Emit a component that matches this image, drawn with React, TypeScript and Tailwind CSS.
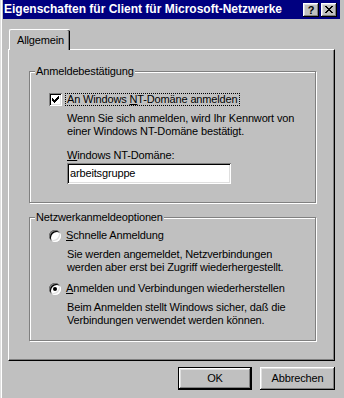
import React from 'react';

const RAISED =
  'shadow-[inset_-1px_-1px_0_#000,inset_1px_1px_0_#fff,inset_-2px_-2px_0_#808080,inset_2px_2px_0_#dfdfdf]';
const SUNKEN =
  'shadow-[inset_1px_1px_0_#808080,inset_-1px_-1px_0_#fff,inset_2px_2px_0_#000,inset_-2px_-2px_0_#dfdfdf]';

function Checkbox({ checked }: { checked?: boolean }) {
  return (
    <span className={`flex items-center justify-center w-[13px] h-[13px] bg-white shrink-0 ${SUNKEN}`}>
      {checked && (
        <svg width="7" height="7" viewBox="0 0 7 7">
          <path d="M0 2H1V3H2V4H3V3H4V2H5V1H6V0H7V3H6V4H5V5H4V6H3V7H2V6H1V5H0Z" fill="#000" />
        </svg>
      )}
    </span>
  );
}

function Radio({ checked }: { checked?: boolean }) {
  return (
    <span
      className={`flex items-center justify-center w-[12px] h-[12px] rounded-full bg-white shrink-0 ${SUNKEN}`}
    >
      {checked && <span className="w-[4px] h-[4px] rounded-full bg-black" />}
    </span>
  );
}

function GroupBox({
  title,
  className,
  children,
}: {
  title: string;
  className: string;
  children: React.ReactNode;
}) {
  return (
    <div
      className={`relative border border-[#808080] shadow-[1px_1px_0_#fff,inset_1px_1px_0_#fff] ${className}`}
    >
      <span className="absolute -top-[7px] left-[5px] px-[1px] bg-[#c0c0c0] leading-[13px]">{title}</span>
      {children}
    </div>
  );
}

function Option({
  control,
  focus,
  children,
}: {
  control: React.ReactNode;
  focus?: boolean;
  children: React.ReactNode;
}) {
  return (
    <div className="flex items-center h-[13px]">
      {control}
      <span
        className={`ml-[3px] px-[1px] leading-[11px] border border-dotted ${
          focus ? 'border-black' : 'border-transparent'
        }`}
      >
        {children}
      </span>
    </div>
  );
}

function TitleButton({ children }: { children: React.ReactNode }) {
  return (
    <span className={`flex items-center justify-center w-[16px] h-[14px] bg-[#c0c0c0] ${RAISED}`}>
      {children}
    </span>
  );
}

function Button({ label, primary, width }: { label: string; primary?: boolean; width: string }) {
  return (
    <button
      className={`h-[23px] ${width} bg-[#c0c0c0] text-[11px] text-black ${
        primary ? 'border border-black' : ''
      }`}
    >
      <span className={`flex items-center justify-center w-full h-full ${RAISED}`}>{label}</span>
    </button>
  );
}

export default function App() {
  return (
    <div className="w-[344px] h-[398px] bg-[#c0c0c0] shadow-[inset_1px_0_0_#dfdfdf,inset_2px_0_0_#fff] font-['Liberation_Sans',Arial,sans-serif] text-[11px] tracking-[-0.15px] text-black overflow-hidden">
      {/* Titelleiste */}
      <div className="ml-[3px] mr-[4px] h-[19px] bg-[#000080] flex items-center pl-[1px] pr-[3px]">
        <span className="flex-1 text-white font-bold text-[12px] tracking-normal leading-[19px] whitespace-nowrap">
          Eigenschaften für Client für Microsoft-Netzwerke
        </span>
        <div className="flex gap-[2px]">
          <TitleButton>
            <span className="font-bold text-[11px] leading-none mt-[1px]">?</span>
          </TitleButton>
          <TitleButton>
            <svg width="8" height="7" viewBox="0 0 8 7">
              <path
                d="M0 0h2v1h-2zM6 0h2v1h-2zM1 1h2v1h-2zM5 1h2v1h-2zM2 2h4v1h-4zM3 3h2v1h-2zM2 4h4v1h-4zM1 5h2v1h-2zM5 5h2v1h-2zM0 6h2v1h-2zM6 6h2v1h-2z"
                fill="#000"
              />
            </svg>
          </TitleButton>
        </div>
      </div>

      {/* Registerkarte */}
      <div className="ml-[8px] mr-[9px] mt-[10px]">
        <div className="flex">
          <div className="relative z-10 -mb-[1px] ml-[1px] h-[21px] w-[61px] bg-[#c0c0c0] border-t border-l border-white rounded-tl-[2px] rounded-tr-[2px] shadow-[inset_-1px_0_0_#000,inset_-2px_0_0_#808080] flex items-center pl-[7px]">
            Allgemein
          </div>
        </div>
        <div className="h-[312px] border-t border-l border-white border-r border-b border-r-black border-b-black shadow-[inset_-1px_-1px_0_#808080] pt-[21px] pl-[20px] pr-[18px]">
          <GroupBox title="Anmeldebestätigung" className="h-[132px] pt-[21px] pl-[19px]">
            <Option control={<Checkbox checked />} focus>
              An Windows <span className="underline underline-offset-[1px]">N</span>T-Domäne anmelden
            </Option>
            <div className="ml-[18px] mt-[6px] leading-[13px]">
              Wenn Sie sich anmelden, wird Ihr Kennwort von
              <br />
              einer Windows NT-Domäne bestätigt.
            </div>
            <div className="ml-[18px] mt-[11px] leading-[13px]">
              <span className="underline underline-offset-[1px]">W</span>indows NT-Domäne:
            </div>
            <div
              className={`ml-[18px] mt-[1px] w-[164px] h-[21px] bg-white flex items-center pl-[3px] ${SUNKEN}`}
            >
              arbeitsgruppe
            </div>
          </GroupBox>

          <GroupBox title="Netzwerkanmeldeoptionen" className="mt-[14px] h-[124px] pt-[11px] pl-[19px]">
            <Option control={<Radio />}>
              <span className="underline underline-offset-[1px]">S</span>chnelle Anmeldung
            </Option>
            <div className="ml-[18px] mt-[6px] leading-[13px]">
              Sie werden angemeldet, Netzverbindungen
              <br />
              werden aber erst bei Zugriff wiederhergestellt.
            </div>
            <div className="mt-[8px]">
              <Option control={<Radio checked />}>
                <span className="underline underline-offset-[1px]">A</span>nmelden und Verbindungen
                wiederherstellen
              </Option>
            </div>
            <div className="ml-[18px] mt-[6px] leading-[13px]">
              Beim Anmelden stellt Windows sicher, daß die
              <br />
              Verbindungen verwendet werden können.
            </div>
          </GroupBox>
        </div>
      </div>

      {/* Schaltflächen */}
      <div className="mt-[6px] mr-[9px] flex justify-end gap-[8px]">
        <Button label="OK" primary width="w-[74px]" />
        <Button label="Abbrechen" width="w-[75px]" />
      </div>
    </div>
  );
}
